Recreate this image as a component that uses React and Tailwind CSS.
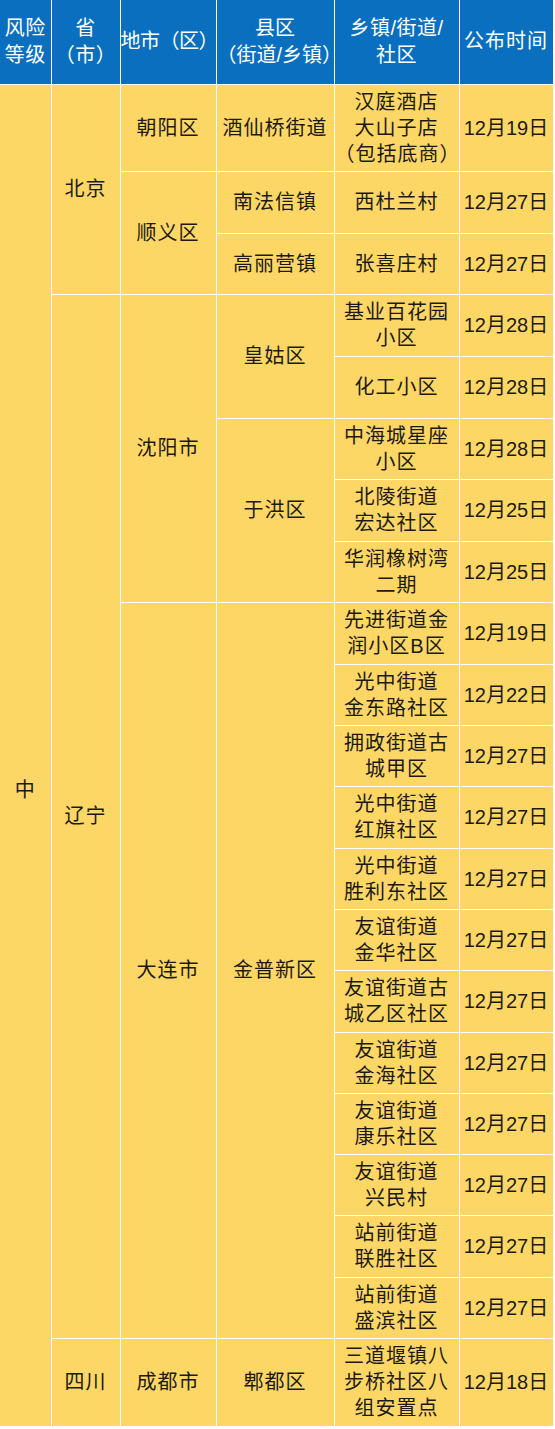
const rows = [
  { h: 87, lv: { t: '中', rs: 21 }, prov: { t: '北京', rs: 3 }, city: { t: '朝阳区', rs: 1 }, dist: { t: '酒仙桥街道', rs: 1 }, place: ['汉庭酒店', '大山子店', '（包括底商）'], date: '12月19日' },
  { h: 62, city: { t: '顺义区', rs: 2 }, dist: { t: '南法信镇', rs: 1 }, place: ['西杜兰村'], date: '12月27日' },
  { h: 61, dist: { t: '高丽营镇', rs: 1 }, place: ['张喜庄村'], date: '12月27日' },
  { h: 62, prov: { t: '辽宁', rs: 17 }, city: { t: '沈阳市', rs: 5 }, dist: { t: '皇姑区', rs: 2 }, place: ['基业百花园', '小区'], date: '12月28日' },
  { h: 62, place: ['化工小区'], date: '12月28日' },
  { h: 61, dist: { t: '于洪区', rs: 3 }, place: ['中海城星座', '小区'], date: '12月28日' },
  { h: 62, place: ['北陵街道', '宏达社区'], date: '12月25日' },
  { h: 61, place: ['华润橡树湾', '二期'], date: '12月25日' },
  { h: 62, city: { t: '大连市', rs: 12 }, dist: { t: '金普新区', rs: 12 }, place: ['先进街道金', '润小区B区'], date: '12月19日' },
  { h: 61, place: ['光中街道', '金东路社区'], date: '12月22日' },
  { h: 61, place: ['拥政街道古', '城甲区'], date: '12月27日' },
  { h: 62, place: ['光中街道', '红旗社区'], date: '12月27日' },
  { h: 61, place: ['光中街道', '胜利东社区'], date: '12月27日' },
  { h: 61, place: ['友谊街道', '金华社区'], date: '12月27日' },
  { h: 62, place: ['友谊街道古', '城乙区社区'], date: '12月27日' },
  { h: 61, place: ['友谊街道', '金海社区'], date: '12月27日' },
  { h: 61, place: ['友谊街道', '康乐社区'], date: '12月27日' },
  { h: 61, place: ['友谊街道', '兴民村'], date: '12月27日' },
  { h: 62, place: ['站前街道', '联胜社区'], date: '12月27日' },
  { h: 61, place: ['站前街道', '盛滨社区'], date: '12月27日' },
  { h: 88, prov: { t: '四川', rs: 1 }, city: { t: '成都市', rs: 1 }, dist: { t: '郫都区', rs: 1 }, place: ['三道堰镇八', '步桥社区八', '组安置点'], date: '12月18日' },
]

const cell = 'border-r border-b border-white text-center align-middle p-0'

function Lines({ lines }) {
  return lines.map((l, i) => <div key={i}>{l}</div>)
}

export default function App() {
  return (
    <div className="w-[555px] min-h-[1429px] bg-white" style={{ fontFamily: '"Liberation Sans", "Noto Sans CJK SC", sans-serif' }}>
      <table className="w-[553px] table-fixed border-collapse text-[20px] leading-[26px] tracking-[1px] text-[#1c1a14]">
        <colgroup>
          <col className="w-[51px]" />
          <col className="w-[69px]" />
          <col className="w-[96px]" />
          <col className="w-[118px]" />
          <col className="w-[125px]" />
          <col className="w-[94px]" />
        </colgroup>
        <thead>
          <tr className="h-[84px] bg-[#0b6fc0] text-white text-[20px] leading-[27px] tracking-[0.5px]">
            <th className={cell + ' font-normal'}><Lines lines={['风险', '等级']} /></th>
            <th className={cell + ' font-normal'}><Lines lines={['省', '（市）']} /></th>
            <th className={cell + ' font-normal tracking-[-0.5px]'}>地市（区）</th>
            <th className={cell + ' font-normal tracking-normal'}><Lines lines={['县区', '（街道/乡镇）']} /></th>
            <th className={cell + ' font-normal'}><Lines lines={['乡镇/街道/', '社区']} /></th>
            <th className={cell + ' font-normal tracking-[1px]'}>公布时间</th>
          </tr>
        </thead>
        <tbody className="bg-[#fcd766]">
          {rows.map((r, i) => (
            <tr key={i} style={{ height: r.h }}>
              {r.lv && <td rowSpan={r.lv.rs} className={cell + ' pt-[70px]'}>{r.lv.t}</td>}
              {r.prov && <td rowSpan={r.prov.rs} className={cell}>{r.prov.t}</td>}
              {r.city && <td rowSpan={r.city.rs} className={cell}>{r.city.t}</td>}
              {r.dist && <td rowSpan={r.dist.rs} className={cell}>{r.dist.t}</td>}
              <td className={cell}><Lines lines={r.place} /></td>
              <td className={cell + ' tracking-normal'}>{r.date}</td>
            </tr>
          ))}
        </tbody>
      </table>
    </div>
  )
}
